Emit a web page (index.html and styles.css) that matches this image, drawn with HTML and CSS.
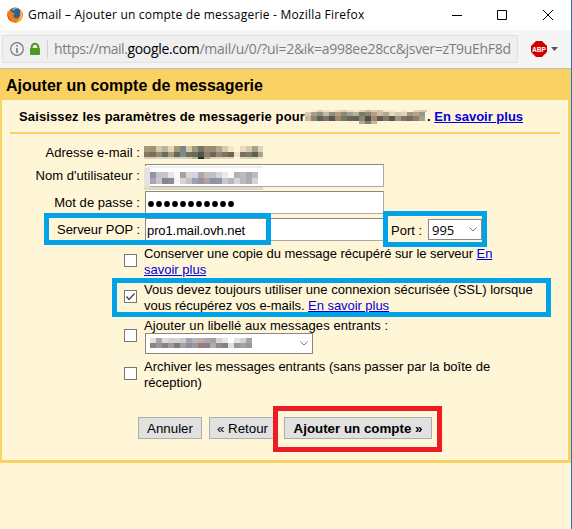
FILE: index.html
```html
<!DOCTYPE html>
<html lang="fr">
<head>
<meta charset="utf-8">
<title>Gmail – Ajouter un compte de messagerie</title>
<link rel="stylesheet" href="styles.css">
</head>
<body>
<div class="window">
  <header class="titlebar">
    <svg class="fox" width="16" height="16" viewBox="0.5 0.5 15 15"><circle cx="8" cy="8" r="7" fill="#e66000"/><circle cx="8.4" cy="6.2" r="5" fill="#27639f"/><path d="M5 3q3-3 6-1Q8 2 7 4z" fill="#66b5d8"/><path d="M1 4Q2 6 4 4l2 2 2 .5Q6 8 7 10q3 3 6-1 1-4-1-7 5 4 2.700 9Q12 16 7 15 0 13 1 4z" fill="#ef7d18"/><path d="M13 3q3 4 1 8-2 4-5 4 4-3 4-6z" fill="#ffc92f"/><path d="M1 6q0 5 4 8Q0 12 1 6z" fill="#c63b17"/></svg>
    <span class="wtitle">Gmail – Ajouter un compte de messagerie - Mozilla Firefox</span>
    <svg class="winctl" width="104" height="12" viewBox="0 0 104 12" fill="none" stroke="#000"><path d="M0 6.500h10M45.500 1.500h9v9h-9zM91 1l10 10M101 1L91 11"/></svg>
  </header>
  <div class="toolbar">
    <div class="urlbox">
      <svg width="30" height="16" viewBox="0 0 30 16"><circle cx="7" cy="8" r="6.300" fill="none" stroke="#777" stroke-width="1.200"/><path d="M6.200 4h1.600v1.600H6.200zM6.200 7h1.600v5H6.200z" fill="#777"/><path d="M21.700 8V6a3.300 3.300 0 0 1 6.600 0v2" fill="none" stroke="#4a9b22" stroke-width="2"/><rect x="20" y="7" width="10" height="7" rx="1" fill="#4a9b22"/></svg>
      <span class="sep"></span>
      <span class="url"><span class="sub">https://mail.</span><b>google.com</b>/mail/u/0/?ui=2&amp;ik=a998ee28cc&amp;jsver=zT9uEhF8d</span>
    </div>
    <svg class="abp" width="28" height="18" viewBox="0 0 28 18"><path d="M5 1h6l5 5v6l-5 5H5l-5-5V6z" fill="#d00000"/><text x="8" y="12" text-anchor="middle" textLength="14" lengthAdjust="spacingAndGlyphs" class="abptext">ABP</text><path d="M20 7h7l-3.500 4z" fill="#555"/></svg>
  </div>
  <main class="panel">
    <h1>Ajouter un compte de messagerie</h1>
    <p class="lead"><span class="leadtext">Saisissez les paramètres de messagerie pour</span><svg class="mosaic" data-name="recipient" width="122" height="14"></svg><span>. <a>En savoir plus</a></span></p>
    <div class="form">
      <div class="row r1"><label>Adresse e-mail :</label><svg class="mosaic" data-name="address" width="119" height="13"></svg></div>
      <div class="row r2"><label>Nom d'utilisateur :</label><div class="field"><svg class="mosaic username" data-name="username" width="119" height="24"></svg></div></div>
      <div class="row r3"><label>Mot de passe :</label><div class="field"><svg width="92" height="8" class="dots" fill="#000"><circle cx="4" cy="4" r="2.900"/><circle cx="12" cy="4" r="2.900"/><circle cx="20" cy="4" r="2.900"/><circle cx="28" cy="4" r="2.900"/><circle cx="36" cy="4" r="2.900"/><circle cx="44" cy="4" r="2.900"/><circle cx="52" cy="4" r="2.900"/><circle cx="60" cy="4" r="2.900"/><circle cx="68" cy="4" r="2.900"/><circle cx="76" cy="4" r="2.900"/><circle cx="84" cy="4" r="2.900"/></svg></div></div>
      <div class="row r4"><label class="popl">Serveur POP :</label><div class="field"><span class="server">pro1.mail.ovh.net</span></div><span class="port">Port :</span><div class="select portsel"><span>995</span><svg width="8" height="5" viewBox="0 0 8 5" fill="none" stroke="#777"><path d="M.5.5L4 4 7.500.5"/></svg></div></div>
    </div>
    <div class="opts">
      <div class="opt o1"><i class="cb"></i><div><span class="tight">Conserver une copie du message récupéré sur le serveur <a>En</a></span><br><a>savoir plus</a></div></div>
      <div class="opt o2"><i class="cb"><svg width="11" height="11" viewBox="0 0 11 11" fill="none" stroke="#444" stroke-width="1.300"><path d="M1.500 5.500L4 8.500 9.500 2.500"/></svg></i><div>Vous devez toujours utiliser une connexion sécurisée (SSL) lorsque<br><span class="tight">vous récupérez vos e-mails. <a>En savoir plus</a></span></div></div>
      <div class="opt o3"><i class="cb"></i><div><span class="loose">Ajouter un libellé aux messages entrants :</span><div class="select lblsel"><svg class="mosaic" data-name="label" width="102" height="11"></svg><svg width="8" height="5" viewBox="0 0 8 5" fill="none" stroke="#777"><path d="M.5.5L4 4 7.500.5"/></svg></div></div></div>
      <div class="opt o4"><i class="cb"></i><div>Archiver les messages entrants (sans passer par la boîte de<br>réception)</div></div>
    </div>
    <div class="buttons"><button class="b1">Annuler</button><button class="b2">« Retour</button><button class="b3">Ajouter un compte »</button></div>
  </main>
  <div class="mark m-server"></div>
  <div class="mark m-port"></div>
  <div class="mark m-ssl"></div>
  <div class="mark m-submit"></div>
</div>
<script src="mosaic.js"></script>
</body>
</html>
```
FILE: styles.css
```css
* { box-sizing: border-box; }
body { margin: 0; font: 13px/16px "Liberation Sans", Arial, sans-serif; color: #000; background: #fff5d7; }
.window { position: relative; width: 572px; height: 529px; border-right: 1px solid #1e7bb8; overflow: hidden; white-space: nowrap; background: #fff5d7; }
.titlebar { height: 30px; background: #fff; display: flex; align-items: center; padding-left: 7px; }
.wtitle { font: 12px/16px "Open Sans", "Noto Sans", sans-serif; letter-spacing: .21px; margin-left: 5px; width: 424px; }
.toolbar { height: 39px; background: #f5f5f5; border-bottom: 1px solid #bbb; display: flex; padding: 5px 0 0 2px; }
.urlbox { width: 516px; height: 28px; background: #efefef; border: 1px solid #e0e0e0; display: flex; align-items: center; padding-left: 7px; }
.sep { width: 1px; height: 19px; background: #d2d2d2; margin: 0 6px 0 7px; }
.url { width: 459px; overflow: hidden; color: #7d7d7d; font: 14px/22px "Open Sans", "Noto Sans", sans-serif; letter-spacing: -.31px; }
.sub { letter-spacing: -.45px; }
.url b { font-weight: 400; color: #000; }
.abp { margin: 5px 0 0 13px; }
.abptext { font: bold 8px "Liberation Sans", sans-serif; fill: #fff; }
.panel { height: 394px; border: solid #fad163; border-width: 0 3px 3px 2px; }
h1 { margin: 0; height: 31px; background: #fad163; font-size: 16px; line-height: 34px; padding-left: 4px; }
.lead { margin: 0 8px; height: 34px; border-bottom: 2px solid #fad163; padding: 9px 0 0 9px; font-weight: bold; display: flex; }
.leadtext { width: 286px; letter-spacing: .13px; }
.lead .mosaic { margin: 1px 0 0 0; }
a { color: #0000e0; text-decoration: underline; }
.form { padding-top: 9px; }
.row { display: flex; align-items: center; }
.row label { width: 138px; margin-right: 5px; text-align: right; letter-spacing: .04px; }
.row .popl { letter-spacing: -.05px; }
.r1 { height: 19px; }
.r1 .mosaic { margin-left: -1px; }
.r2, .r3, .r4 { height: 27px; }
.field { position: relative; width: 239px; height: 23px; background: #fff; border: 1px solid #888; border-right-color: #aaa; border-bottom-color: #aaa; display: flex; align-items: center; padding-left: 2px; }
.username { position: absolute; left: -2px; top: 1px; }
.dots { margin: 2px 0 0 -1px; }
.server { margin: 2px 0 0 -1px; letter-spacing: -.1px; }
.port { margin: 2px 0 0 7px; width: 37px; }
.select { background: #fff; border: 1px solid #888; display: flex; align-items: center; justify-content: space-between; padding: 0 4px; }
.portsel { width: 54px; height: 21px; padding-left: 3px; font-family: "Open Sans", sans-serif; }
.opts { padding: 3px 0 0 122px; }
.opt { display: grid; grid-template-columns: 20px 1fr; }
.o1, .o2 { height: 36px; }
.o3 { height: 41px; }
.cb { width: 13px; height: 13px; background: #fff; border: 1px solid #777; margin-top: 8px; display: flex; }
.o3 .cb { margin-top: 11px; }
.tight { letter-spacing: -.05px; }
.loose { letter-spacing: .07px; }
.lblsel { width: 168px; height: 21px; margin: -1px 0 0 1px; }
.buttons { display: flex; padding: 26px 0 0 136px; }
button { height: 22px; font: 13.33px/16px "Liberation Sans", Arial, sans-serif; color: #000; background: #e1e1e1; border: 1px solid #adadad; padding: 1px 0 0; white-space: nowrap; }
.b1 { width: 64px; }
.b2 { width: 67px; margin-left: 7px; }
.b3 { width: 148px; margin-left: 8px; font-weight: bold; }
.mark { position: absolute; border: 5px solid #00a2e8; }
.m-server { left: 44px; top: 213px; width: 227px; height: 32px; }
.m-port { left: 383px; top: 211px; width: 104px; height: 36px; }
.m-ssl { left: 112px; top: 278px; width: 439px; height: 39px; }
.m-submit { left: 273px; top: 406px; width: 169px; height: 46px; border-color: #ed1c24; }
```
FILE: mosaic.js
```js
// Each redacted value is rows of 6px cells: [y, height, x, colours]
const data = {
  recipient: [
    [0, 2, 6, 'f5ebcf e0d2b4 f0e6ca f5ebcf e8ddc0 e0cbab e5e0c8 f5ebcf ddd3b5 c9bd9f d8cfb5 cfc5ab f0e6ca f5ebcf fff5d7 f5ebcf fff5d7 e5d9bb e0c8a0 c5cdb8'],
    [2, 4, 0, 'd8ccb0 b09a80 8f8f80 c9b99a 8c9088 b59c80 8a8a7c a0a08c b8b09c 7a7a6c 8f8470 b89c80 c8c0a8 b0a890 e0d8c0 d0c8b0 e0d4b8 a09880 c0a080 8c9c94'],
    [6, 5, 0, 'c8b898 8c8474 5c6458 807060 505850 988870 707868 686858 5c6460 908468 504c48 a08870 685848 807868 585850 a09880 807460 706c60 908068 a8a090'],
    [11, 3, 54, 'b0aa90 85806c c0b89c']],
  address: [
    [0, 6, 0, 'a59a7c 9c937a d9c5a0 b9b79b e5d6b4 ad9678 7c8588 d5c9a8 9e957a 747765 a58a72 958d76 b8a68c d9cbaa f3e7c9 fff5d7 e8dcbc d5caa8 a6a28a e0d5b7'],
    [6, 5, 0, '827b64 796c58 92897a 656a62 a5977a 5e6862 788a90 716d5c 666b52 4d5550 8c8068 74655c 91857a 80705c 6b6458 eee1c4 777060 807a68 5b6258 a5a291'],
    [11, 2, 0, 'd9d1b5 d9d1b5 e0d8bc d9d1b5 e0d8bc d9d1b5 d9d1b5 d9d1b5 b8b498 292d2a aaa58d d9d1b5 e0d8bc e0d8bc e0d8bc fff5d7 e0d8bc d9d1b5 e0d8bc eee4c8']],
  username: [
    [0, 2, 0, 'eeeeee eeeeee eeeeee eeeeee eeeeee eeeeee eeeeee eeeeee eeeeee eeeeee eeeeee eeeeee eeeeee eeeeee eeeeee eeeeee eeeeee eeeeee eeeeee eeeeee'],
    [2, 19, 0, 'e5e3de'],
    [6, 6, 6, '9292aa b4c9c8 c5c5cb e5e5e5 fff8f2 a6a1a7 dbd6d1 d1d5e2 aaa7b3 c6beb4 bdc1cc d5d5e1 e9e9ef fff9ef b3b1b1 b8bdc5 aba9ad bbbbc3'],
    [12, 6, 6, 'b2a2b6 cbc3cb 888492 8c8998 f5f5f5 d5d5da c6c0bf 9da1ae 9a929f aaa39f 8e93a2 9694a5 c8c8cd b5b5bd d5d5d5 bdb9b7 a9adba d9d4cf'],
    [21, 3, 0, 'ddd9c3 ddd9c3 ddd9c3 ddd9c3 ddd9c3 ddd9c3 ddd9c3 ddd9c3 ddd9c3 ddd9c3 ddd9c3 ddd9c3 ddd9c3 ddd9c3 ddd9c3 ddd9c3 ddd9c3 ddd9c3 ddd9c3 ddd9c3']],
  label: [
    [0, 5, 0, 'e4e0dc aba5a1 e1dbd6 d2d0cf dad2ca c6ced2 a5a2aa b3b5b8 c4aaa1 aca7ac a4a0a3 dbd3cb e8e6e3 ffffff e8e5e0 d2d2d2 a9a5a0'],
    [5, 5, 0, '8b8580 9c949a 838184 a39b98 747c82 ab9f99 8790a0 9b989e 947d7a 858086 b2aaa9 8b8b93 88827c e2dfda 91999e a6a19b 9c94a0']]
};
for (const svg of document.querySelectorAll('.mosaic')) {
  svg.innerHTML = data[svg.dataset.name].map(([y, h, x, colours]) =>
    colours.split(' ').map((c, i) =>
      `<rect x="${x + i * 6}" y="${y}" width="6" height="${h}" fill="#${c}"/>`).join('')).join('');
}
```
